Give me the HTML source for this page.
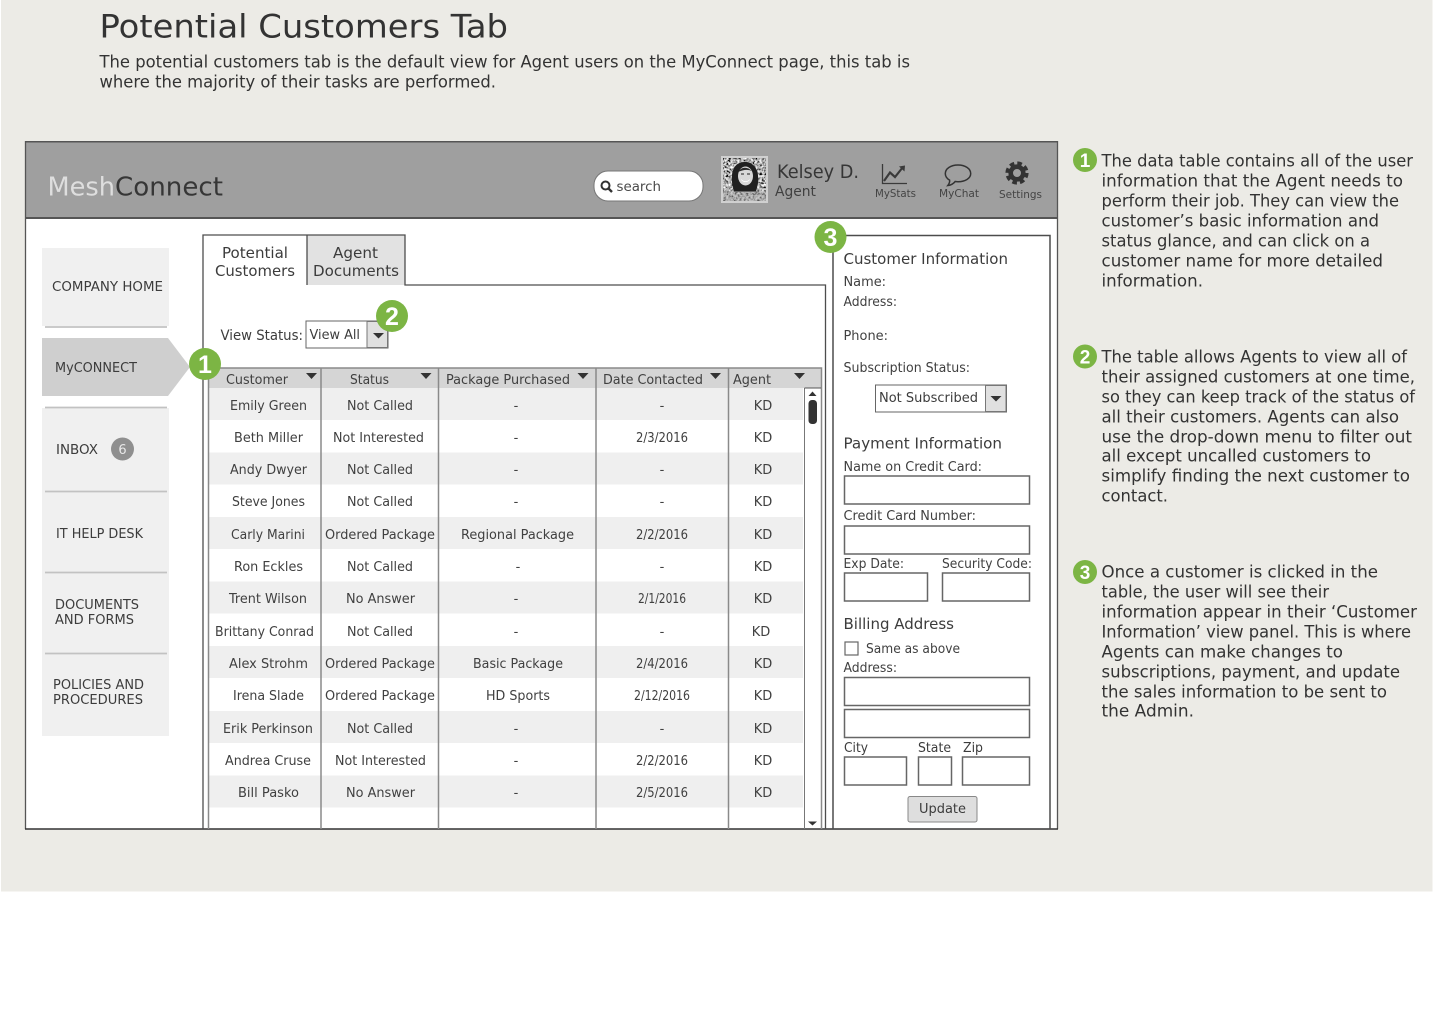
<!DOCTYPE html>
<html>
<head>
<meta charset="utf-8">
<title>Potential Customers Tab</title>
<style>
html,body{margin:0;padding:0;background:#fff;width:1440px;height:1024px;overflow:hidden}
svg{display:block;filter:blur(.35px)}
text{font-family:"DejaVu Sans","Liberation Sans",sans-serif;fill:#3c3c3c}
.t{font-size:13px;fill:#404040}
.f{font-size:13px;fill:#404040}
.n{font-size:16.500px;fill:#333}
.s{font-size:13px;fill:#404040}
.h{font-size:15px;fill:#3c3c3c}
.b{fill:#fff;stroke:#666;stroke-width:1.5}
.l{stroke:#8a8a8a;stroke-width:1.5}
.g{fill:#7cb544}
.w{fill:#fff;font-family:"Liberation Sans",sans-serif;font-weight:bold}
</style>
</head>
<body>
<svg width="1440" height="1024" viewBox="0 0 1440 1024" xmlns="http://www.w3.org/2000/svg">
<defs>
<filter id="noise" x="0" y="0" width="100%" height="100%">
<feTurbulence type="fractalNoise" baseFrequency="0.45" numOctaves="2" seed="7"/>
<feColorMatrix type="matrix" values="2.200 0 0 0 -.65  2.200 0 0 0 -.65  2.200 0 0 0 -.65  0 0 0 0 1"/>
</filter>
</defs>
<rect width="1440" height="1024" fill="#fff"/>
<rect x="1" y="0" width="1431.500" height="891.500" fill="#ecebe6"/>

<text x="99.500" y="37.500" font-size="32" style="fill:#333" textLength="408.500" lengthAdjust="spacingAndGlyphs">Potential Customers Tab</text>
<text class="n" x="99.500" y="67.500" textLength="810.500" lengthAdjust="spacingAndGlyphs">The potential customers tab is the default view for Agent users on the MyConnect page, this tab is</text>
<text class="n" x="99.500" y="87.500" textLength="396.500" lengthAdjust="spacingAndGlyphs">where the majority of their tasks are performed.</text>

<!-- app frame -->
<rect x="25" y="141" width="1033" height="688" fill="#fff"/>
<rect x="25" y="141" width="1033" height="77" fill="#9f9f9f"/>
<rect x="25" y="217" width="1033" height="2" fill="#555"/>
<rect x="25" y="141" width="1033" height="1.500" fill="#555"/>
<path d="M25.500 141V829M1057.500 141V829" stroke="#555" stroke-width="1.300" fill="none"/>
<path d="M25 829H1058" stroke="#333" stroke-width="1.500"/>

<text x="47.500" y="195.500" font-size="26" style="fill:#dedede" textLength="67.500" lengthAdjust="spacingAndGlyphs">Mesh</text>
<text x="115" y="195.500" font-size="26" style="fill:#363636" textLength="108" lengthAdjust="spacingAndGlyphs">Connect</text>

<!-- search -->
<rect x="594" y="171" width="109" height="30" rx="14" fill="#fff" stroke="#777" stroke-width="1"/>
<circle cx="605.500" cy="185.500" r="4" fill="none" stroke="#333" stroke-width="2"/>
<path d="M608.500 188.500L612 192" stroke="#333" stroke-width="2.400"/>
<text x="616.500" y="191" font-size="13.500" style="fill:#4a4a4a" textLength="44.500" lengthAdjust="spacingAndGlyphs">search</text>

<!-- avatar -->
<rect x="721" y="156" width="47" height="47" fill="#d0d0d0"/>
<rect x="723" y="158" width="43" height="43" filter="url(#noise)"/>
<path d="M734 192c-1-6-3-10-2-17c1-9 6-13 13-13s12 5 13 13c1 7-1 12-2 17z" fill="#202020"/>
<ellipse cx="745.500" cy="176" rx="7.500" ry="9.500" fill="#d8d8d8"/>
<path d="M738 172c3-5 9-6 14-1c-5-2-9-1-14 1z" fill="#2a2a2a"/>
<path d="M741 174h3M747 174h3" stroke="#444" stroke-width="1.200"/>
<path d="M741 179c3 3 6 3 9 0c-1 4-8 4-9 0z" fill="#fff"/>
<path d="M723 191h43v10h-43z" fill="#a4a4a4" opacity=".55"/>

<text x="777" y="178" font-size="19" style="fill:#363636" textLength="82" lengthAdjust="spacingAndGlyphs">Kelsey D.</text>
<text x="775" y="196" font-size="14" style="fill:#404040" textLength="41" lengthAdjust="spacingAndGlyphs">Agent</text>

<!-- MyStats icon -->
<path d="M882.500 164V183.500H907" fill="none" stroke="#3a3a3a" stroke-width="1.300"/>
<path d="M884 181L890 172.500L895 177L903 167" fill="none" stroke="#3a3a3a" stroke-width="2.200"/>
<path d="M899 166.500L905 165.500L904.500 171.500Z" fill="#3a3a3a"/>
<text x="875" y="197" font-size="10.500" style="fill:#444" textLength="41" lengthAdjust="spacingAndGlyphs">MyStats</text>
<!-- MyChat icon -->
<path d="M958 165c-7.500 0-12.700 3.800-12.700 8.600c0 2.800 1.700 5 4.300 6.500c.3 2-.9 4.300-1.800 5.400c2.800-.3 5.800-2 7.400-4c.9.200 1.800.2 2.800.2c7.500 0 12.700-3.600 12.700-8.100c0-4.800-5.200-8.600-12.700-8.600z" fill="none" stroke="#333" stroke-width="1.500"/>
<text x="939" y="197" font-size="10.500" style="fill:#444" textLength="40" lengthAdjust="spacingAndGlyphs">MyChat</text>
<!-- Settings gear -->
<circle cx="1017" cy="173" r="9.800" fill="none" stroke="#333" stroke-width="3.600" stroke-dasharray="4.600 3.100"/>
<circle cx="1017" cy="173" r="6.300" fill="none" stroke="#333" stroke-width="4.600"/>
<text x="999" y="198" font-size="10.500" style="fill:#444" textLength="43" lengthAdjust="spacingAndGlyphs">Settings</text>

<!-- sidebar -->
<rect x="42" y="248" width="127" height="78" fill="#f0f0f0"/>
<rect x="42" y="408" width="127" height="328" fill="#f0f0f0"/>
<path d="M42 338H168L190 367L168 396H42Z" fill="#cfcfcf"/>
<path d="M45 327H167M45 407.500H167M45 491.500H167M45 572.500H167M45 653.500H167" stroke="#c2c2c2" stroke-width="1.800"/>
<text x="52" y="291" font-size="13" textLength="111" lengthAdjust="spacingAndGlyphs">COMPANY HOME</text>
<text x="55" y="372" font-size="13" textLength="82" lengthAdjust="spacingAndGlyphs">MyCONNECT</text>
<text x="56" y="454" font-size="13" textLength="42" lengthAdjust="spacingAndGlyphs">INBOX</text>
<text x="56" y="538" font-size="13" textLength="87" lengthAdjust="spacingAndGlyphs">IT HELP DESK</text>
<text x="55" y="609" font-size="13" textLength="84" lengthAdjust="spacingAndGlyphs">DOCUMENTS</text>
<text x="55" y="624" font-size="13" textLength="79" lengthAdjust="spacingAndGlyphs">AND FORMS</text>
<text x="53" y="689" font-size="13" textLength="91" lengthAdjust="spacingAndGlyphs">POLICIES AND</text>
<text x="53" y="704" font-size="13" textLength="90" lengthAdjust="spacingAndGlyphs">PROCEDURES</text>
<circle cx="122.500" cy="449" r="11.500" fill="#8f8f8f"/>
<text x="122.500" y="454" font-size="13" text-anchor="middle" style="fill:#e8e8e8">6</text>

<!-- tabs / main panel -->
<rect x="307" y="235.500" width="98" height="49.500" fill="#e2e2e2"/>
<path d="M203 829V235H405V285H825.500V829" fill="none" stroke="#4d4d4d" stroke-width="1.300"/>
<path d="M307 235.500V285" stroke="#4d4d4d" stroke-width="1.300"/>
<text class="h" x="222" y="258" textLength="66" lengthAdjust="spacingAndGlyphs">Potential</text>
<text class="h" x="215" y="276" textLength="80" lengthAdjust="spacingAndGlyphs">Customers</text>
<text class="h" x="333" y="258" textLength="45" lengthAdjust="spacingAndGlyphs">Agent</text>
<text class="h" x="313" y="276" textLength="86" lengthAdjust="spacingAndGlyphs">Documents</text>

<text x="220.500" y="340" font-size="14" textLength="82.500" lengthAdjust="spacingAndGlyphs">View Status:</text>
<rect x="306" y="321" width="82" height="27" fill="#fff" stroke="#666" stroke-width="1"/>
<rect x="367" y="321.500" width="20.500" height="26" fill="#e0e0e0" stroke="#777" stroke-width="1"/>
<path d="M373 333H384L378.500 338.500Z" fill="#333"/>
<text x="309.500" y="339" font-size="13.500" textLength="50.500" lengthAdjust="spacingAndGlyphs">View All</text>

<!-- table -->
<rect x="208" y="368" width="613" height="20" fill="#d5d5d5"/>
<rect x="209" y="388" width="594" height="32" fill="#efefef"/>
<rect x="209" y="452.500" width="594" height="32" fill="#efefef"/>
<rect x="209" y="517" width="594" height="32" fill="#efefef"/>
<rect x="209" y="581.500" width="594" height="32" fill="#efefef"/>
<rect x="209" y="646" width="594" height="32" fill="#efefef"/>
<rect x="209" y="711" width="594" height="32" fill="#efefef"/>
<rect x="209" y="775.500" width="594" height="32" fill="#efefef"/>
<path d="M208 368H821.500V829M208.500 368V829M321 368V829M438.500 368V829M596 368V829M728.500 368V829" fill="none" stroke="#8a8a8a" stroke-width="1.500"/>
<path d="M804.500 388V829" stroke="#777" stroke-width="1"/>
<path d="M804.500 388H821" stroke="#555" stroke-width="1"/>
<path d="M808.500 396L812.500 391.500L816.500 396Z" fill="#333"/>
<rect x="808.500" y="400" width="8.500" height="24" rx="3.500" fill="#333"/>
<path d="M808 821.500H817L812.500 825.500Z" fill="#333"/>
<path d="M306 373H317L311.500 379ZM420.500 373H431.500L426 379ZM577.500 373H588.500L583 379ZM710 373H721L715.500 379ZM794 373H805L799.500 379Z" fill="#333"/>

<text class="s" x="226" y="384" textLength="62" lengthAdjust="spacingAndGlyphs">Customer</text>
<text class="s" x="350" y="384" textLength="39" lengthAdjust="spacingAndGlyphs">Status</text>
<text class="s" x="446" y="384" textLength="124" lengthAdjust="spacingAndGlyphs">Package Purchased</text>
<text class="s" x="603" y="384" textLength="100" lengthAdjust="spacingAndGlyphs">Date Contacted</text>
<text class="s" x="733" y="384" textLength="38" lengthAdjust="spacingAndGlyphs">Agent</text>

<text class="t" x="230" y="410" textLength="77" lengthAdjust="spacingAndGlyphs">Emily Green</text>
<text class="t" x="234" y="442" textLength="69" lengthAdjust="spacingAndGlyphs">Beth Miller</text>
<text class="t" x="230" y="474" textLength="77" lengthAdjust="spacingAndGlyphs">Andy Dwyer</text>
<text class="t" x="232" y="506" textLength="73" lengthAdjust="spacingAndGlyphs">Steve Jones</text>
<text class="t" x="231" y="539" textLength="74" lengthAdjust="spacingAndGlyphs">Carly Marini</text>
<text class="t" x="234" y="571" textLength="69" lengthAdjust="spacingAndGlyphs">Ron Eckles</text>
<text class="t" x="229" y="603" textLength="78" lengthAdjust="spacingAndGlyphs">Trent Wilson</text>
<text class="t" x="215" y="636" textLength="99" lengthAdjust="spacingAndGlyphs">Brittany Conrad</text>
<text class="t" x="229" y="668" textLength="79" lengthAdjust="spacingAndGlyphs">Alex Strohm</text>
<text class="t" x="233" y="700" textLength="71" lengthAdjust="spacingAndGlyphs">Irena Slade</text>
<text class="t" x="223" y="733" textLength="90" lengthAdjust="spacingAndGlyphs">Erik Perkinson</text>
<text class="t" x="225" y="765" textLength="86" lengthAdjust="spacingAndGlyphs">Andrea Cruse</text>
<text class="t" x="238" y="797" textLength="61" lengthAdjust="spacingAndGlyphs">Bill Pasko</text>

<text class="t" x="347" y="410" textLength="66" lengthAdjust="spacingAndGlyphs">Not Called</text>
<text class="t" x="333" y="442" textLength="91" lengthAdjust="spacingAndGlyphs">Not Interested</text>
<text class="t" x="347" y="474" textLength="66" lengthAdjust="spacingAndGlyphs">Not Called</text>
<text class="t" x="347" y="506" textLength="66" lengthAdjust="spacingAndGlyphs">Not Called</text>
<text class="t" x="325" y="539" textLength="110" lengthAdjust="spacingAndGlyphs">Ordered Package</text>
<text class="t" x="347" y="571" textLength="66" lengthAdjust="spacingAndGlyphs">Not Called</text>
<text class="t" x="346" y="603" textLength="69" lengthAdjust="spacingAndGlyphs">No Answer</text>
<text class="t" x="347" y="636" textLength="66" lengthAdjust="spacingAndGlyphs">Not Called</text>
<text class="t" x="325" y="668" textLength="110" lengthAdjust="spacingAndGlyphs">Ordered Package</text>
<text class="t" x="325" y="700" textLength="110" lengthAdjust="spacingAndGlyphs">Ordered Package</text>
<text class="t" x="347" y="733" textLength="66" lengthAdjust="spacingAndGlyphs">Not Called</text>
<text class="t" x="335" y="765" textLength="91" lengthAdjust="spacingAndGlyphs">Not Interested</text>
<text class="t" x="346" y="797" textLength="69" lengthAdjust="spacingAndGlyphs">No Answer</text>

<g text-anchor="middle">
<text class="t" x="516" y="410">-</text>
<text class="t" x="516" y="442">-</text>
<text class="t" x="516" y="474">-</text>
<text class="t" x="516" y="506">-</text>
<text class="t" x="517.500" y="539" textLength="113" lengthAdjust="spacingAndGlyphs">Regional Package</text>
<text class="t" x="518" y="571">-</text>
<text class="t" x="516" y="603">-</text>
<text class="t" x="516" y="636">-</text>
<text class="t" x="518" y="668" textLength="90" lengthAdjust="spacingAndGlyphs">Basic Package</text>
<text class="t" x="518" y="700" textLength="64" lengthAdjust="spacingAndGlyphs">HD Sports</text>
<text class="t" x="516" y="733">-</text>
<text class="t" x="516" y="765">-</text>
<text class="t" x="516" y="797">-</text>

<text class="t" x="662" y="410">-</text>
<text class="t" x="662" y="442" textLength="52" lengthAdjust="spacingAndGlyphs">2/3/2016</text>
<text class="t" x="662" y="474">-</text>
<text class="t" x="662" y="506">-</text>
<text class="t" x="662" y="539" textLength="52" lengthAdjust="spacingAndGlyphs">2/2/2016</text>
<text class="t" x="662" y="571">-</text>
<text class="t" x="662" y="603" textLength="48" lengthAdjust="spacingAndGlyphs">2/1/2016</text>
<text class="t" x="662" y="636">-</text>
<text class="t" x="662" y="668" textLength="52" lengthAdjust="spacingAndGlyphs">2/4/2016</text>
<text class="t" x="662" y="700" textLength="56" lengthAdjust="spacingAndGlyphs">2/12/2016</text>
<text class="t" x="662" y="733">-</text>
<text class="t" x="662" y="765" textLength="52" lengthAdjust="spacingAndGlyphs">2/2/2016</text>
<text class="t" x="662" y="797" textLength="52" lengthAdjust="spacingAndGlyphs">2/5/2016</text>

<text class="t" x="763" y="410">KD</text>
<text class="t" x="763" y="442">KD</text>
<text class="t" x="763" y="474">KD</text>
<text class="t" x="763" y="506">KD</text>
<text class="t" x="763" y="539">KD</text>
<text class="t" x="763" y="571">KD</text>
<text class="t" x="763" y="603">KD</text>
<text class="t" x="761" y="636">KD</text>
<text class="t" x="763" y="668">KD</text>
<text class="t" x="763" y="700">KD</text>
<text class="t" x="763" y="733">KD</text>
<text class="t" x="763" y="765">KD</text>
<text class="t" x="763" y="797">KD</text>
</g>

<!-- right panel -->
<path d="M833 829V235.500H1050V829" fill="none" stroke="#4d4d4d" stroke-width="1.500"/>
<text x="843.500" y="264" font-size="15" textLength="164.500" lengthAdjust="spacingAndGlyphs">Customer Information</text>
<text class="f" x="843.500" y="286" textLength="42.500" lengthAdjust="spacingAndGlyphs">Name:</text>
<text class="f" x="843.500" y="306" textLength="53.500" lengthAdjust="spacingAndGlyphs">Address:</text>
<text class="f" x="843.500" y="340" textLength="44.500" lengthAdjust="spacingAndGlyphs">Phone:</text>
<text class="f" x="843.500" y="372" textLength="126.500" lengthAdjust="spacingAndGlyphs">Subscription Status:</text>
<rect x="875.500" y="385" width="131" height="27" fill="#fff" stroke="#666" stroke-width="1"/>
<rect x="985.500" y="385.500" width="20.500" height="26" fill="#e0e0e0" stroke="#777" stroke-width="1"/>
<path d="M990.500 396H1001.500L996 401.500Z" fill="#333"/>
<text x="879" y="402" font-size="13.500" textLength="99" lengthAdjust="spacingAndGlyphs">Not Subscribed</text>

<text x="843.500" y="448.500" font-size="15" textLength="158.500" lengthAdjust="spacingAndGlyphs">Payment Information</text>
<text class="f" x="843.500" y="471" textLength="138.500" lengthAdjust="spacingAndGlyphs">Name on Credit Card:</text>
<rect class="b" x="844.500" y="476" width="185" height="28"/>
<text class="f" x="843.500" y="520" textLength="132.500" lengthAdjust="spacingAndGlyphs">Credit Card Number:</text>
<rect class="b" x="844.500" y="526" width="185" height="28"/>
<text class="f" x="843.500" y="568" textLength="60.500" lengthAdjust="spacingAndGlyphs">Exp Date:</text>
<text class="f" x="942" y="568" textLength="90" lengthAdjust="spacingAndGlyphs">Security Code:</text>
<rect class="b" x="844.500" y="573" width="83" height="28"/>
<rect class="b" x="942.500" y="573" width="87" height="28"/>

<text x="843.500" y="629" font-size="15" textLength="110.500" lengthAdjust="spacingAndGlyphs">Billing Address</text>
<rect class="b" x="845" y="642" width="13" height="13" style="stroke-width:1.200"/>
<text class="f" x="866" y="653" textLength="94" lengthAdjust="spacingAndGlyphs">Same as above</text>
<text class="f" x="843.500" y="672" textLength="53.500" lengthAdjust="spacingAndGlyphs">Address:</text>
<rect class="b" x="844.500" y="677.500" width="185" height="28"/>
<rect class="b" x="844.500" y="709.500" width="185" height="28"/>
<text x="844" y="752" font-size="13.500" textLength="24" lengthAdjust="spacingAndGlyphs">City</text>
<text x="918" y="752" font-size="13.500" textLength="33" lengthAdjust="spacingAndGlyphs">State</text>
<text x="963" y="752" font-size="13.500" textLength="20" lengthAdjust="spacingAndGlyphs">Zip</text>
<rect class="b" x="844.500" y="757" width="62" height="28"/>
<rect class="b" x="918.500" y="757" width="33" height="28"/>
<rect class="b" x="962.500" y="757" width="67" height="28"/>
<rect x="908" y="796.500" width="69" height="25.500" rx="2" fill="#dedede" stroke="#888" stroke-width="1"/>
<text x="919" y="813" font-size="13.500" textLength="47" lengthAdjust="spacingAndGlyphs">Update</text>

<!-- badges -->
<circle class="g" cx="205" cy="364" r="16"/>
<text class="w" x="205" y="373" font-size="25" text-anchor="middle" style="fill:#fff">1</text>
<circle class="g" cx="392" cy="316" r="16"/>
<text class="w" x="392" y="325" font-size="25" text-anchor="middle" style="fill:#fff">2</text>
<circle class="g" cx="830.500" cy="237" r="16"/>
<text class="w" x="830.500" y="246" font-size="25" text-anchor="middle" style="fill:#fff">3</text>

<circle class="g" cx="1085" cy="160" r="12"/>
<text class="w" x="1085" y="167" font-size="19" text-anchor="middle" style="fill:#fff">1</text>
<circle class="g" cx="1085" cy="356.500" r="12"/>
<text class="w" x="1085" y="363.500" font-size="19" text-anchor="middle" style="fill:#fff">2</text>
<circle class="g" cx="1085" cy="572" r="12"/>
<text class="w" x="1085" y="579" font-size="19" text-anchor="middle" style="fill:#fff">3</text>

<!-- notes -->
<text class="n" x="1101.500" y="166.500" textLength="311.500" lengthAdjust="spacingAndGlyphs">The data table contains all of the user</text>
<text class="n" x="1101.500" y="186.500" textLength="301.500" lengthAdjust="spacingAndGlyphs">information that the Agent needs to</text>
<text class="n" x="1101.500" y="206.500" textLength="297.500" lengthAdjust="spacingAndGlyphs">perform their job. They can view the</text>
<text class="n" x="1101.500" y="226.500" textLength="277.500" lengthAdjust="spacingAndGlyphs">customer’s basic information and</text>
<text class="n" x="1101.500" y="246.500" textLength="268.500" lengthAdjust="spacingAndGlyphs">status glance, and can click on a</text>
<text class="n" x="1101.500" y="266.500" textLength="281.500" lengthAdjust="spacingAndGlyphs">customer name for more detailed</text>
<text class="n" x="1101.500" y="286.500" textLength="101.500" lengthAdjust="spacingAndGlyphs">information.</text>

<text class="n" x="1101.500" y="362.500" textLength="305.500" lengthAdjust="spacingAndGlyphs">The table allows Agents to view all of</text>
<text class="n" x="1101.500" y="382.500" textLength="313.500" lengthAdjust="spacingAndGlyphs">their assigned customers at one time,</text>
<text class="n" x="1101.500" y="402.500" textLength="313.500" lengthAdjust="spacingAndGlyphs">so they can keep track of the status of</text>
<text class="n" x="1101.500" y="422.500" textLength="297.500" lengthAdjust="spacingAndGlyphs">all their customers. Agents can also</text>
<text class="n" x="1101.500" y="442.500" textLength="310.500" lengthAdjust="spacingAndGlyphs">use the drop-down menu to filter out</text>
<text class="n" x="1101.500" y="461.500" textLength="269.500" lengthAdjust="spacingAndGlyphs">all except uncalled customers to</text>
<text class="n" x="1101.500" y="481.500" textLength="308.500" lengthAdjust="spacingAndGlyphs">simplify finding the next customer to</text>
<text class="n" x="1101.500" y="501.500" textLength="66.500" lengthAdjust="spacingAndGlyphs">contact.</text>

<text class="n" x="1101.500" y="577.500" textLength="276.500" lengthAdjust="spacingAndGlyphs">Once a customer is clicked in the</text>
<text class="n" x="1101.500" y="597.500" textLength="227.500" lengthAdjust="spacingAndGlyphs">table, the user will see their</text>
<text class="n" x="1101.500" y="617.500" textLength="315.500" lengthAdjust="spacingAndGlyphs">information appear in their ‘Customer</text>
<text class="n" x="1101.500" y="637.500" textLength="309.500" lengthAdjust="spacingAndGlyphs">Information’ view panel. This is where</text>
<text class="n" x="1101.500" y="657.500" textLength="241.500" lengthAdjust="spacingAndGlyphs">Agents can make changes to</text>
<text class="n" x="1101.500" y="677.500" textLength="298.500" lengthAdjust="spacingAndGlyphs">subscriptions, payment, and update</text>
<text class="n" x="1101.500" y="697.500" textLength="285.500" lengthAdjust="spacingAndGlyphs">the sales information to be sent to</text>
<text class="n" x="1101.500" y="716.500" textLength="92.500" lengthAdjust="spacingAndGlyphs">the Admin.</text>
</svg>
</body>
</html>
